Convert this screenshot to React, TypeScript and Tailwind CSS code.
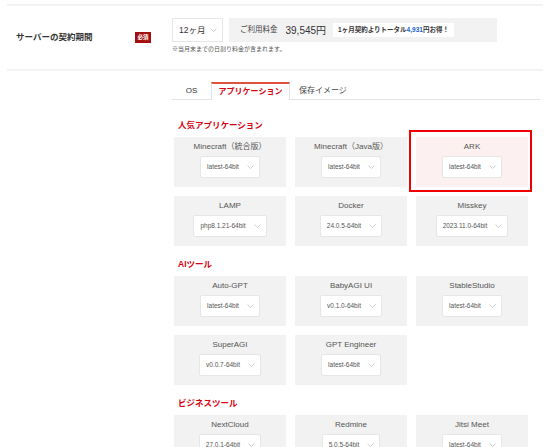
import type { ReactNode } from "react";

const FONT = { fontFamily: '"Liberation Sans", "Noto Sans CJK JP", sans-serif' };

type App = { name: string; version: string; highlight?: boolean };

const sections: Array<{ title: string; apps: App[] }> = [
  {
    title: "人気アプリケーション",
    apps: [
      { name: "Minecraft（統合版）", version: "latest-64bit" },
      { name: "Minecraft（Java版）", version: "latest-64bit" },
      { name: "ARK", version: "latest-64bit", highlight: true },
      { name: "LAMP", version: "php8.1.21-64bit" },
      { name: "Docker", version: "24.0.5-64bit" },
      { name: "Misskey", version: "2023.11.0-64bit" },
    ],
  },
  {
    title: "AIツール",
    apps: [
      { name: "Auto-GPT", version: "latest-64bit" },
      { name: "BabyAGI UI", version: "v0.1.0-64bit" },
      { name: "StableStudio", version: "latest-64bit" },
      { name: "SuperAGI", version: "v0.0.7-64bit" },
      { name: "GPT Engineer", version: "latest-64bit" },
    ],
  },
  {
    title: "ビジネスツール",
    apps: [
      { name: "NextCloud", version: "27.0.1-64bit" },
      { name: "Redmine", version: "5.0.5-64bit" },
      { name: "Jitsi Meet", version: "latest-64bit" },
    ],
  },
];

function Chevron({ className }: { className?: string }) {
  return (
    <svg width="7" height="4" viewBox="0 0 7 4" className={className} fill="none">
      <path d="M0.5 0.5 L3.5 3.5 L6.5 0.5" stroke="#c4c4c4" strokeWidth="0.8" />
    </svg>
  );
}

function VersionSelect({ value }: { value: string }) {
  return (
    <div className="flex h-[22px] items-center gap-[8px] rounded-[2px] border border-[#e6e6e6] bg-white pl-[6px] pr-[5px] text-[6.5px] text-[#555]">
      <span>{value}</span>
      <Chevron />
    </div>
  );
}

function AppCard({ app }: { app: App }) {
  return (
    <div className="relative">
      <div
        className={
          app.highlight
            ? "flex h-[50px] flex-col items-center bg-[#fdf0f0] pt-[5px]"
            : "flex h-[50px] flex-col items-center bg-[#f2f2f2] pt-[5px]"
        }
      >
        <div className="h-[10px] text-[8px] leading-[10px] text-[#555]">{app.name}</div>
        <div className="mt-[4px]">
          <VersionSelect value={app.version} />
        </div>
      </div>
      {app.highlight ? (
        <div className="pointer-events-none absolute -top-[7px] -bottom-[5px] -left-[7px] -right-[4px] border-2 border-[#f00000]" />
      ) : null}
    </div>
  );
}

function SectionTitle({ children }: { children: ReactNode }) {
  return (
    <h2 className="pl-[6px] text-[8.5px] font-bold leading-[11px] text-[#d6000f]">{children}</h2>
  );
}

export default function App() {
  return (
    <div className="h-[447px] w-[550px] overflow-hidden bg-white text-[#333]" style={FONT}>
      {/* contract period row */}
      <div className="mx-[7px] mt-[4px] flex h-[67px] border-y-2 border-[#f3f3f3]">
        <div className="flex w-[165px] shrink-0 items-center pb-[1px]">
          <span className="w-[128px] pl-[9px] text-[8.5px] font-bold text-[#333]">サーバーの契約期間</span>
          <span className="flex h-[11px] items-center bg-[#a30f0f] px-[2.5px] text-[5.5px] font-bold text-white">
            必須
          </span>
        </div>
        <div className="pt-[12px]">
          <div className="flex gap-[6px]">
            <div className="flex h-[24px] w-[51px] items-center justify-between border border-[#e6e6e6] bg-white pl-[6px] pr-[5px] text-[8.5px]">
              <span>12ヶ月</span>
              <Chevron />
            </div>
            <div className="flex h-[24px] w-[268px] items-center bg-[#f2f2f2] pl-[11px]">
              <span className="text-[7.5px] text-[#444]">ご利用料金</span>
              <span className="ml-[8px] text-[10px] text-[#333]">39,545円</span>
              <span className="ml-[7px] flex h-[14px] items-center bg-white px-[5px] text-[6.5px] font-bold text-[#333]">
                1ヶ月契約よりトータル<span className="text-[#1a5fd6]">4,931</span>円お得！
              </span>
            </div>
          </div>
          <p className="mt-[3px] text-[6px] text-[#555]">※当月末までの日割り料金が含まれます。</p>
        </div>
      </div>

      {/* tabs */}
      <div className="ml-[172px] mt-[11px] mr-[10px] flex h-[18px] border-b border-[#e3e3e3]">
        <div className="-mb-px flex w-[39px] items-center justify-center border-b border-[#e3e3e3] text-[8px] text-[#333]">
          OS
        </div>
        <div className="-mb-px flex w-[79px] items-center justify-center border-x border-t-2 border-x-[#e3e3e3] border-t-[#e0533f] bg-white text-[8px] font-bold text-[#d6000f]">
          アプリケーション
        </div>
        <div className="flex items-center pl-[9px] text-[8px] text-[#444]">保存イメージ</div>
      </div>

      {/* app sections */}
      <div className="ml-[172px] mr-[22px] mt-[20px] flex flex-col gap-[13px]">
        {sections.map((section) => (
          <section key={section.title} className="flex flex-col gap-[6px]">
            <SectionTitle>{section.title}</SectionTitle>
            <div className="grid grid-cols-3 gap-[9px] pl-[2px]">
              {section.apps.map((app) => (
                <AppCard key={app.name} app={app} />
              ))}
            </div>
          </section>
        ))}
      </div>
    </div>
  );
}
